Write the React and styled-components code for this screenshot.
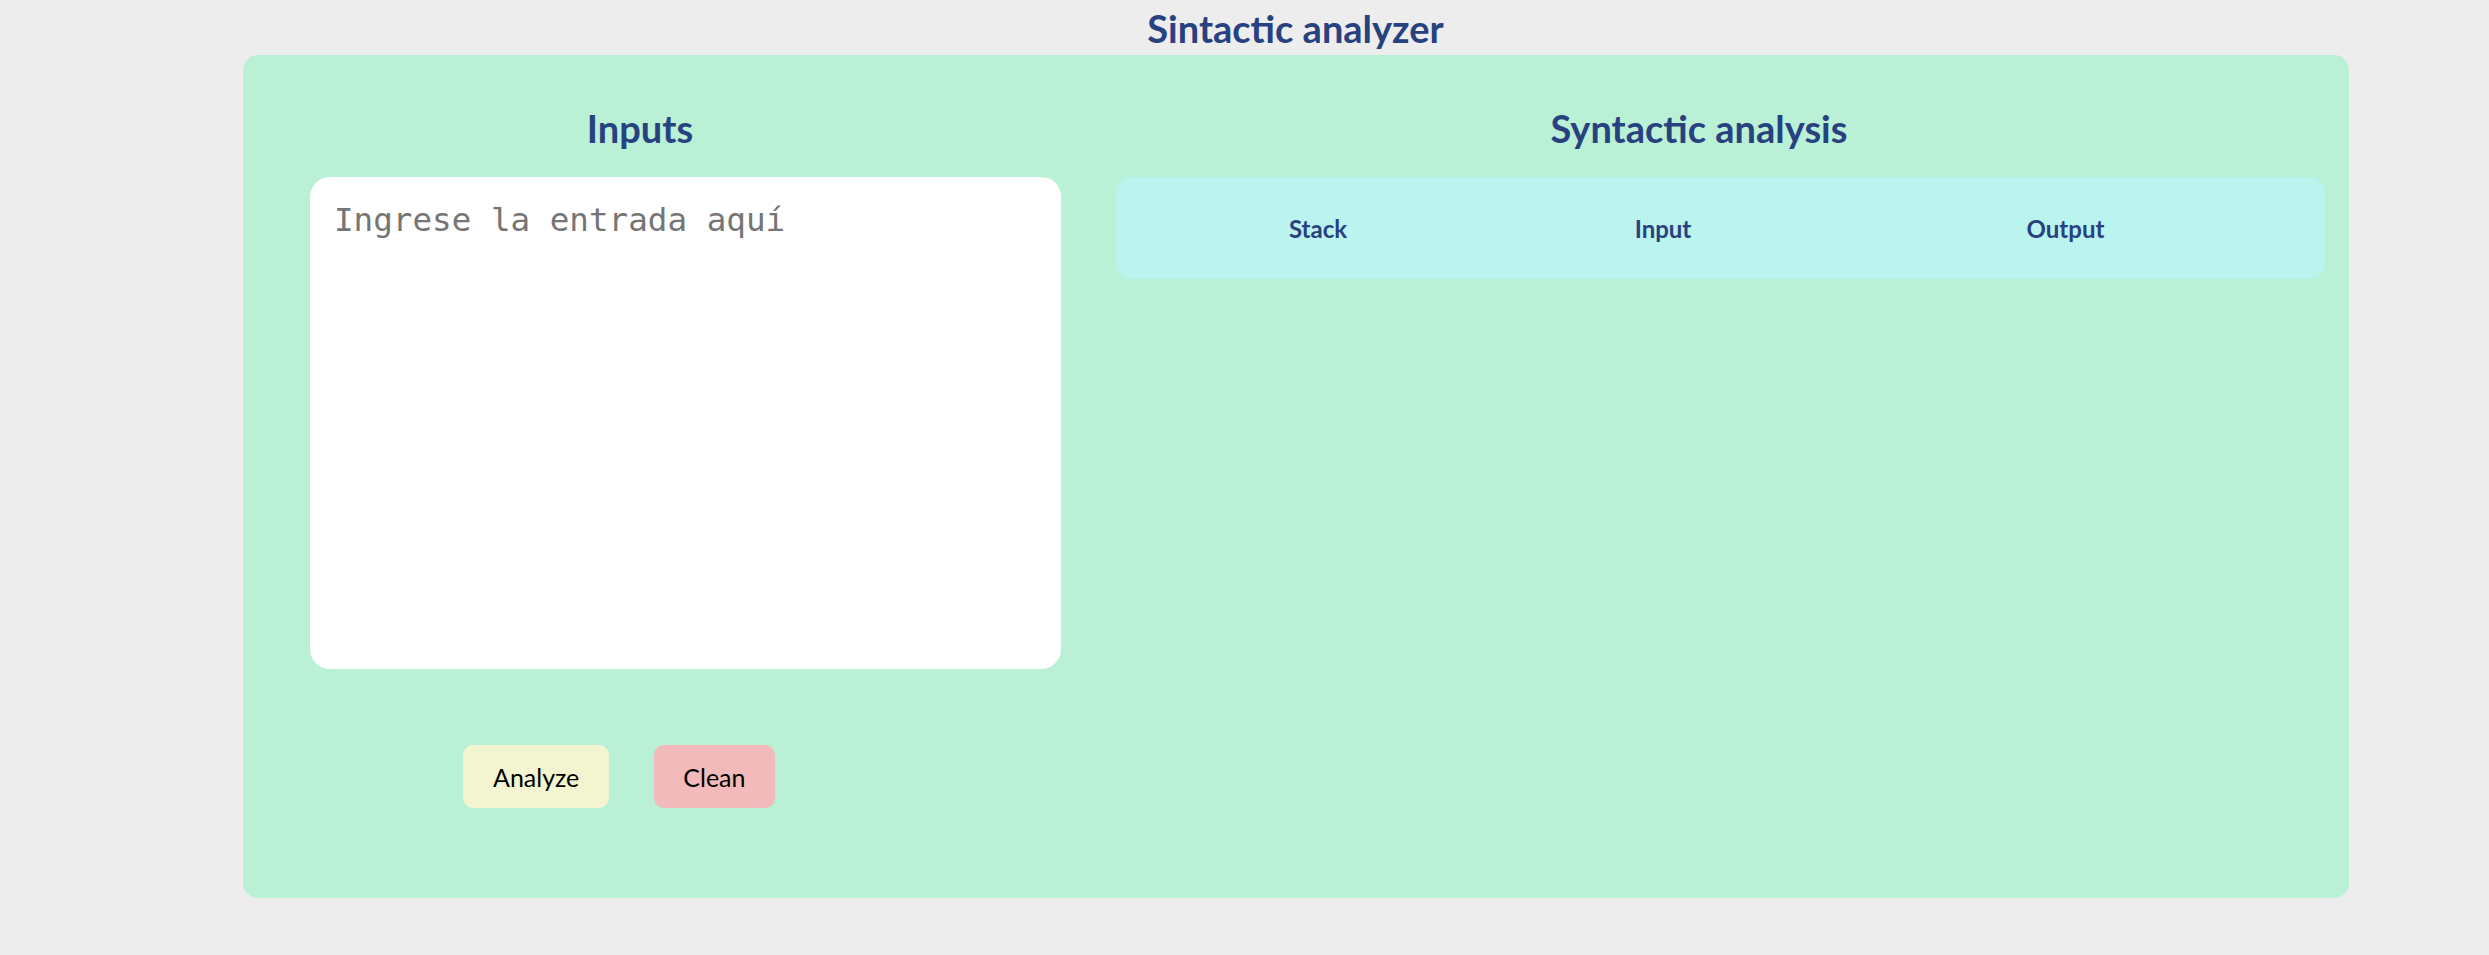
import React, { useState } from 'react'
import styled, { createGlobalStyle } from 'styled-components'

const GlobalStyle = createGlobalStyle`
  html, body {
    margin: 0;
    padding: 0;
    background: #ededed;
    font-family: Lato, "Noto Sans", sans-serif;
  }
`

const Page = styled.div`
  display: flex;
  flex-direction: column;
  padding-top: 4px;
`

const Title = styled.h1`
  margin: 0;
  font-size: 38px;
  line-height: 48px;
  font-weight: 700;
  color: #28417f;
  text-align: center;
  padding-left: 102px;
`

const Panel = styled.main`
  margin: 3px 0 0 243px;
  width: 2106px;
  height: 843px;
  box-sizing: border-box;
  padding-top: 50px;
  background: #b9f0d6;
  border-radius: 15px;
  display: grid;
  grid-template-columns: 794px 1fr;
  column-gap: 12px;
  align-items: start;
`

const Column = styled.section`
  display: flex;
  flex-direction: column;
  min-width: 0;
`

const Heading = styled.h2`
  margin: 0 0 26px;
  font-size: 38px;
  line-height: 46px;
  font-weight: 700;
  color: #28417f;
  text-align: center;
`

const Editor = styled.textarea`
  margin-left: 67px;
  width: 751px;
  height: 492px;
  box-sizing: border-box;
  padding: 24px 24px;
  border: none;
  outline: none;
  resize: none;
  border-radius: 20px;
  background: #fff;
  font-family: "DejaVu Sans Mono", "Liberation Mono", monospace;
  font-size: 32.6px;
  color: #222;

  &::placeholder {
    color: #757575;
  }
`

const Actions = styled.div`
  display: flex;
  gap: 45px;
  margin-top: 76px;
  padding-left: 220px;
`

const Button = styled.button`
  height: 63px;
  padding: 0 ${p => (p.$variant === 'danger' ? '29px' : '30px')};
  border: none;
  border-radius: 10px;
  background: ${p => (p.$variant === 'danger' ? '#f2baba' : '#f2f5cf')};
  font-family: Lato, "Noto Sans", sans-serif;
  font-size: 25px;
  color: #000;
  cursor: pointer;
`

const TableHead = styled.div`
  margin: 0 24px 0 67px;
  height: 102px;
  border-radius: 15px;
  background: #bbf3ef;
  display: grid;
  grid-template-columns: 404px 286px 1fr;
  align-items: center;
`

const HeadCell = styled.div`
  text-align: center;
  font-size: 24px;
  font-weight: 700;
  color: #28417f;
`

export default function App() {
  const [text, setText] = useState('')

  return (
    <Page>
      <GlobalStyle />
      <Title>Sintactic analyzer</Title>
      <Panel>
        <Column>
          <Heading>Inputs</Heading>
          <Editor
            placeholder="Ingrese la entrada aquí"
            value={text}
            onChange={e => setText(e.target.value)}
          />
          <Actions>
            <Button>Analyze</Button>
            <Button $variant="danger" onClick={() => setText('')}>Clean</Button>
          </Actions>
        </Column>
        <Column>
          <Heading>Syntactic analysis</Heading>
          <TableHead>
            <HeadCell>Stack</HeadCell>
            <HeadCell>Input</HeadCell>
            <HeadCell>Output</HeadCell>
          </TableHead>
        </Column>
      </Panel>
    </Page>
  )
}
